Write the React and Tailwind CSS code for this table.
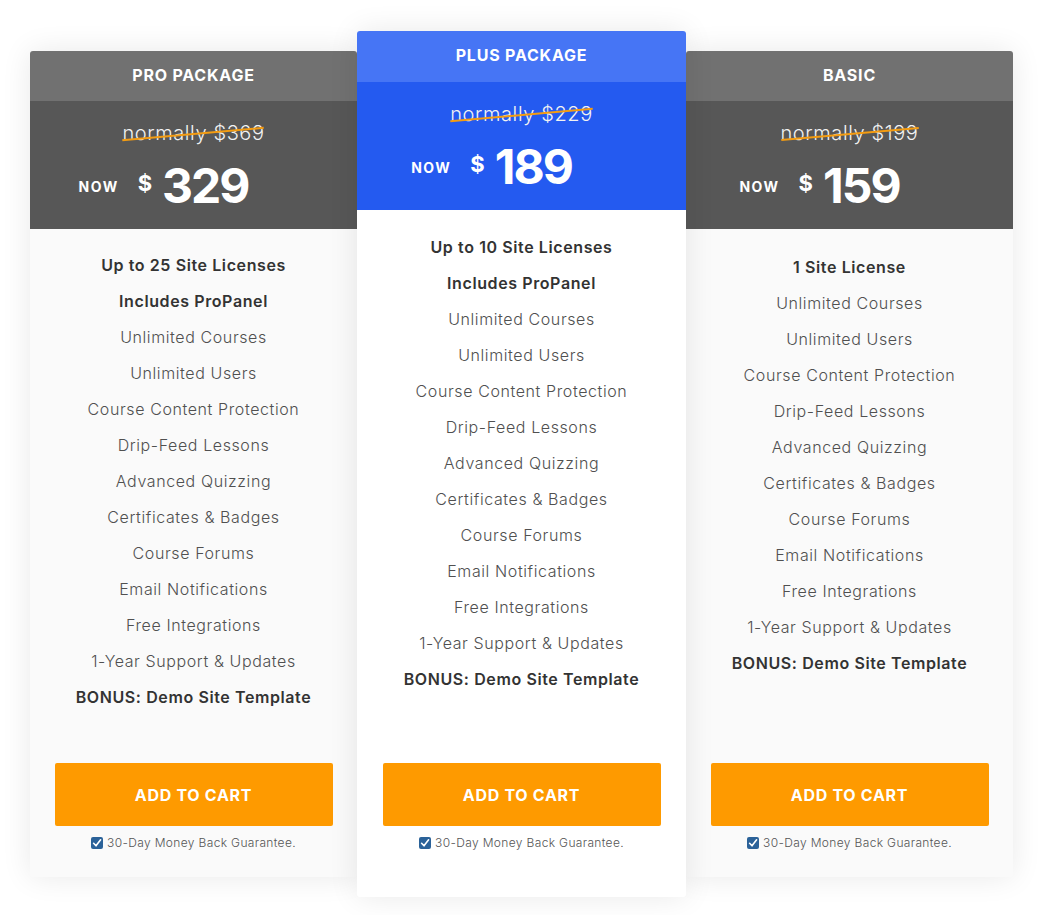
import React from "react";

const plans = [
  {
    title: "PRO PACKAGE",
    old: "$369",
    price: "329",
    width: "w-[327px]",
    features: [
      ["Up to 25 Site Licenses", true],
      ["Includes ProPanel", true],
      ["Unlimited Courses"],
      ["Unlimited Users"],
      ["Course Content Protection"],
      ["Drip-Feed Lessons"],
      ["Advanced Quizzing"],
      ["Certificates & Badges"],
      ["Course Forums"],
      ["Email Notifications"],
      ["Free Integrations"],
      ["1-Year Support & Updates"],
      ["BONUS: Demo Site Template", true],
    ],
  },
  {
    title: "PLUS PACKAGE",
    old: "$229",
    price: "189",
    featured: true,
    width: "w-[329px]",
    features: [
      ["Up to 10 Site Licenses", true],
      ["Includes ProPanel", true],
      ["Unlimited Courses"],
      ["Unlimited Users"],
      ["Course Content Protection"],
      ["Drip-Feed Lessons"],
      ["Advanced Quizzing"],
      ["Certificates & Badges"],
      ["Course Forums"],
      ["Email Notifications"],
      ["Free Integrations"],
      ["1-Year Support & Updates"],
      ["BONUS: Demo Site Template", true],
    ],
  },
  {
    title: "BASIC",
    old: "$199",
    price: "159",
    width: "w-[327px]",
    extraTop: true,
    features: [
      ["1 Site License", true],
      ["Unlimited Courses"],
      ["Unlimited Users"],
      ["Course Content Protection"],
      ["Drip-Feed Lessons"],
      ["Advanced Quizzing"],
      ["Certificates & Badges"],
      ["Course Forums"],
      ["Email Notifications"],
      ["Free Integrations"],
      ["1-Year Support & Updates"],
      ["BONUS: Demo Site Template", true],
    ],
  },
];

// small blue checked box next to the guarantee
const CheckBox = () => (
  <svg width="12" height="12" viewBox="0 0 12 12" className="shrink-0">
    <rect x="0" y="0" width="12" height="12" rx="2" fill="#2b6299" />
    <path d="M2.6 6.3 L5 8.8 L9.6 2.8" stroke="#fff" strokeWidth="1.6" fill="none" strokeLinecap="round" strokeLinejoin="round" />
  </svg>
);

const PlanCard = ({ plan }) => {
  const f = plan.featured;
  return (
    <div
      className={`flex flex-col ${plan.width} rounded-[3px] overflow-hidden shadow-[0_0_30px_rgba(0,0,0,0.09)] ${
        f ? "h-[866px] bg-white relative z-10" : "h-[826px] mt-[20px] bg-[#fafafa]"
      }`}
    >
      {/* Header */}
      <div
        className={`flex items-center justify-center text-white font-bold text-[16px] tracking-[0.8px] ${
          f ? "h-[51px] pb-[3px] bg-[#4675f5]" : "h-[50px] pb-[2px] bg-[#717171]"
        }`}
      >
        {plan.title}
      </div>

      {/* Price */}
      <div className={`h-[128px] flex flex-col items-center text-white ${f ? "bg-[#245af0]" : "bg-[#575757]"}`}>
        <div className="relative mt-[18px] text-[20px] font-light leading-[28px] tracking-[0.6px] text-[#f2f2f2]">
          normally {plan.old}
          <span className="absolute left-0 right-0 top-[14px] h-[1.5px] bg-[#f39c12] -rotate-[5deg]" />
        </div>
        <div className="flex items-center pr-[60px] mt-[11px] h-[56px]">
          <span className="text-[14px] font-bold tracking-[1.5px]">NOW</span>
          <span className="ml-[19px] text-[22px] font-bold -mt-[6px]">$</span>
          <span className="ml-[10px] text-[48px] font-bold leading-none tracking-[-2px]">{plan.price}</span>
        </div>
      </div>

      {/* Features */}
      <ul className={`flex flex-col items-center ${plan.extraTop ? "pt-[20px]" : f ? "pt-[19px]" : "pt-[18px]"}`}>
        {plan.features.map(([text, bold], i) => (
          <li
            key={i}
            className={`h-[36px] flex items-center text-[16px] ${
              bold ? "font-semibold text-[#333] tracking-[0.6px]" : "font-light text-[#505050] tracking-[0.6px]"
            }`}
          >
            {text}
          </li>
        ))}
      </ul>

      {/* Cart */}
      <div className={`mt-auto px-[25px] flex flex-col items-center ${f ? "pb-[48px]" : "pb-[28px]"}`}>
        <button className="w-[278px] h-[63px] rounded-[2px] bg-[#fe9a00] text-white font-bold text-[16px] tracking-[0.7px]">
          ADD TO CART
        </button>
        <div className="mt-[11px] flex items-center gap-[4px] text-[12px] font-light text-[#555] h-[12px] tracking-[0.35px]">
          <CheckBox />
          <span>30-Day Money Back Guarantee.</span>
        </div>
      </div>
    </div>
  );
};

export default function App() {
  return (
    <div className="w-[1038px] h-[915px] bg-white overflow-hidden font-['Inter','Noto_Sans',sans-serif]">
      <div className="flex items-start pl-[30px] pt-[31px]">
        <PlanCard plan={plans[0]} />
        <PlanCard plan={plans[1]} />
        <PlanCard plan={plans[2]} />
      </div>
    </div>
  );
}
